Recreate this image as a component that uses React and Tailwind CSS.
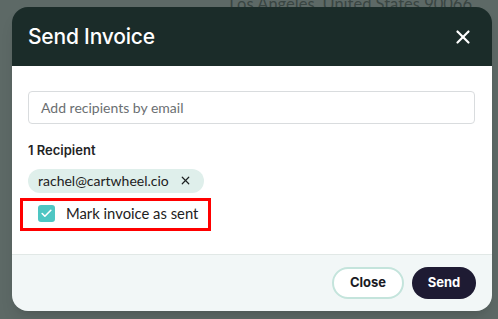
import { X, Check } from "lucide-react";

const font = { fontFamily: "Inter, 'Noto Sans', sans-serif" };
const bodyFont = { fontFamily: "Lato, 'Noto Sans', sans-serif" };

export default function App() {
  return (
    <div
      className="relative w-[498px] h-[319px] overflow-hidden bg-[#5d6966]"
      style={font}
    >
      {/* page behind the overlay */}
      <div
        className="absolute right-[26px] top-[-5px] text-[16.5px] leading-[18px] whitespace-nowrap text-[#394542]"
        style={bodyFont}
      >
        Los Angeles, United States 90066
      </div>

      {/* modal */}
      <div className="absolute left-[12px] top-[7px] w-[480px] h-[304px] rounded-[16px] overflow-hidden flex flex-col shadow-lg">
        {/* header */}
        <div className="h-[59px] bg-[#1b2c29] flex items-center justify-between pl-[16px] pr-[18px]">
          <h2 className="text-white text-[21px] font-medium tracking-[-0.2px]">
            Send Invoice
          </h2>
          <X className="text-white" size={22} strokeWidth={2.4} />
        </div>

        {/* body */}
        <div className="bg-white flex-1 px-[16px] pt-[25px]" style={bodyFont}>
          <div className="h-[33px] w-[447px] border border-[#d9dcde] rounded-[4px] flex items-center px-[12px] text-[14px] text-[#6b6f72]">
            Add recipients by email
          </div>
          <div
            className="mt-[17px] text-[13px] font-semibold text-[#1f2425]"
            style={font}
          >
            1 Recipient
          </div>
          <div className="mt-[8px] inline-flex items-center h-[24px] rounded-full bg-[#dfefeb] pl-[10px] pr-[12px] text-[14px] text-[#1d2122] whitespace-nowrap">
            rachel@cartwheel.cio
            <X className="ml-[10px] text-[#1d2122]" size={13} strokeWidth={2.2} />
          </div>
          <div className="mt-[5px] ml-[-8px] w-[191px] h-[33px] border-[3px] border-[#ff0000] flex items-center pl-[15px] pb-[2px]">
            <div className="w-[17px] h-[17px] shrink-0 rounded-[3px] bg-[#4ec6c3] flex items-center justify-center">
              <Check className="text-white" size={13} strokeWidth={3} />
            </div>
            <span className="ml-[11px] text-[14.8px] text-[#1d2122] whitespace-nowrap">
              Mark invoice as sent
            </span>
          </div>
        </div>

        {/* footer */}
        <div className="h-[57px] bg-[#f2f7f7] border-t border-[#e1e8e6] flex items-center justify-end gap-[8px] pr-[16px]">
          <button className="h-[32px] w-[72px] rounded-full border-2 border-[#c4e4dc] bg-white text-[13px] font-bold text-[#1a1a24]">
            Close
          </button>
          <button className="h-[32px] w-[64px] rounded-full bg-[#1e1b33] text-[13px] font-bold text-white">
            Send
          </button>
        </div>
      </div>
    </div>
  );
}
